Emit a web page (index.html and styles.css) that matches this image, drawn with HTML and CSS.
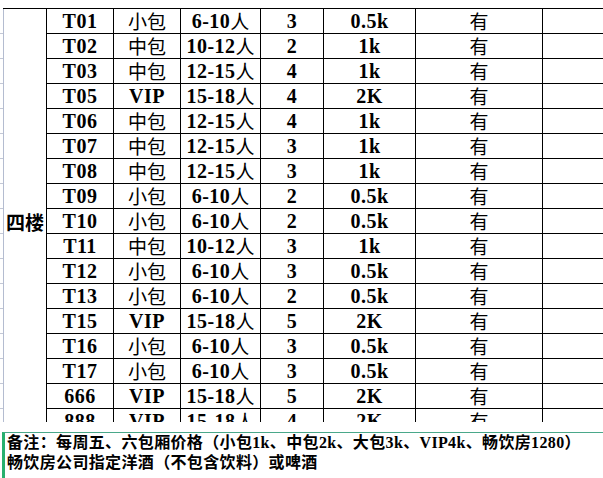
FILE: index.html
```html
<!DOCTYPE html>
<html lang="zh">
<head>
<meta charset="utf-8">
<link rel="stylesheet" href="styles.css">
</head>
<body>
<div class="sheet">
  <div class="grid">
    <div class="floor">四楼</div>

    <div class="c">T01</div><div class="c cn">小包</div><div class="c">6-10<span class="cn">人</span></div><div class="c">3</div><div class="c">0.5k</div><div class="c cn">有</div><div class="c"></div>
    <div class="c">T02</div><div class="c cn">中包</div><div class="c">10-12<span class="cn">人</span></div><div class="c">2</div><div class="c">1k</div><div class="c cn">有</div><div class="c"></div>
    <div class="c">T03</div><div class="c cn">中包</div><div class="c">12-15<span class="cn">人</span></div><div class="c">4</div><div class="c">1k</div><div class="c cn">有</div><div class="c"></div>
    <div class="c">T05</div><div class="c">VIP</div><div class="c">15-18<span class="cn">人</span></div><div class="c">4</div><div class="c">2K</div><div class="c cn">有</div><div class="c"></div>
    <div class="c">T06</div><div class="c cn">中包</div><div class="c">12-15<span class="cn">人</span></div><div class="c">4</div><div class="c">1k</div><div class="c cn">有</div><div class="c"></div>
    <div class="c">T07</div><div class="c cn">中包</div><div class="c">12-15<span class="cn">人</span></div><div class="c">3</div><div class="c">1k</div><div class="c cn">有</div><div class="c"></div>
    <div class="c">T08</div><div class="c cn">中包</div><div class="c">12-15<span class="cn">人</span></div><div class="c">3</div><div class="c">1k</div><div class="c cn">有</div><div class="c"></div>
    <div class="c">T09</div><div class="c cn">小包</div><div class="c">6-10<span class="cn">人</span></div><div class="c">2</div><div class="c">0.5k</div><div class="c cn">有</div><div class="c"></div>
    <div class="c">T10</div><div class="c cn">小包</div><div class="c">6-10<span class="cn">人</span></div><div class="c">2</div><div class="c">0.5k</div><div class="c cn">有</div><div class="c"></div>
    <div class="c">T11</div><div class="c cn">中包</div><div class="c">10-12<span class="cn">人</span></div><div class="c">3</div><div class="c">1k</div><div class="c cn">有</div><div class="c"></div>
    <div class="c">T12</div><div class="c cn">小包</div><div class="c">6-10<span class="cn">人</span></div><div class="c">3</div><div class="c">0.5k</div><div class="c cn">有</div><div class="c"></div>
    <div class="c">T13</div><div class="c cn">小包</div><div class="c">6-10<span class="cn">人</span></div><div class="c">2</div><div class="c">0.5k</div><div class="c cn">有</div><div class="c"></div>
    <div class="c">T15</div><div class="c">VIP</div><div class="c">15-18<span class="cn">人</span></div><div class="c">5</div><div class="c">2K</div><div class="c cn">有</div><div class="c"></div>
    <div class="c">T16</div><div class="c cn">小包</div><div class="c">6-10<span class="cn">人</span></div><div class="c">3</div><div class="c">0.5k</div><div class="c cn">有</div><div class="c"></div>
    <div class="c">T17</div><div class="c cn">小包</div><div class="c">6-10<span class="cn">人</span></div><div class="c">3</div><div class="c">0.5k</div><div class="c cn">有</div><div class="c"></div>
    <div class="c">666</div><div class="c">VIP</div><div class="c">15-18<span class="cn">人</span></div><div class="c">5</div><div class="c">2K</div><div class="c cn">有</div><div class="c"></div>
    <div class="c">888</div><div class="c">VIP</div><div class="c">15-18<span class="cn">人</span></div><div class="c">4</div><div class="c">2K</div><div class="c cn">有</div><div class="c"></div>
  </div>
</div>
<div class="note">
  <p>备注：每周五、六包厢价格（小包1k、中包2k、大包3k、VIP4k、畅饮房1280）</p>
  <p>畅饮房公司指定洋酒（不包含饮料）或啤酒</p>
</div>
</body>
</html>
```
FILE: styles.css
```css
html, body {
  margin: 0;
  padding: 0;
  background: #ffffff;
  overflow: hidden;
}

body {
  width: 603px;
  height: 478px;
  font-family: "Liberation Serif", "Noto Sans CJK SC", serif;
  color: #000;
}

.sheet {
  height: 414px;
  margin-top: 8px;
  padding-left: 3px;
  overflow: hidden;
  background-image: repeating-linear-gradient(to bottom, transparent 0, transparent 24px, #c3c8d6 24px, #c3c8d6 25px);
  background-size: 3px 100%;
  background-repeat: no-repeat;
  background-position: 0 1px;
}

.grid {
  display: grid;
  grid-template-columns: 44px 67px 67px 80px 63px 92px 127px 80px;
  grid-auto-rows: 25px;
  border-top: 1px solid #000;
  width: max-content;
}

.floor {
  grid-row: 1 / span 17;
  grid-column: 1;
  border-left: 1px solid #b4bcd0;
  border-right: 1px solid #000;
  display: flex;
  align-items: center;
  justify-content: center;
  font-family: "Noto Sans CJK SC", sans-serif;
  font-size: 19px;
  font-weight: 700;
}

.c {
  border-right: 1px solid #000;
  border-bottom: 1px solid #000;
  display: flex;
  align-items: center;
  justify-content: center;
  font-size: 20px;
  font-weight: 700;
  line-height: 24px;
  letter-spacing: 0.5px;
  white-space: nowrap;
}

.cn {
  font-family: "Noto Sans CJK SC", sans-serif;
  font-weight: 400;
  font-size: 19px;
  letter-spacing: 0;
}

.note {
  margin: 10px 0 0 2px;
  border-left: 3px solid #27b06e;
  border-top: 1px solid #4aa88a;
  padding: 0 0 0 2px;
  height: 45px;
  font-family: "Liberation Serif", "Noto Sans CJK SC", serif;
  font-size: 16px;
  font-weight: 700;
}

.note p {
  margin: 0;
  line-height: 20px;
  letter-spacing: 0.35px;
  white-space: nowrap;
}
```
